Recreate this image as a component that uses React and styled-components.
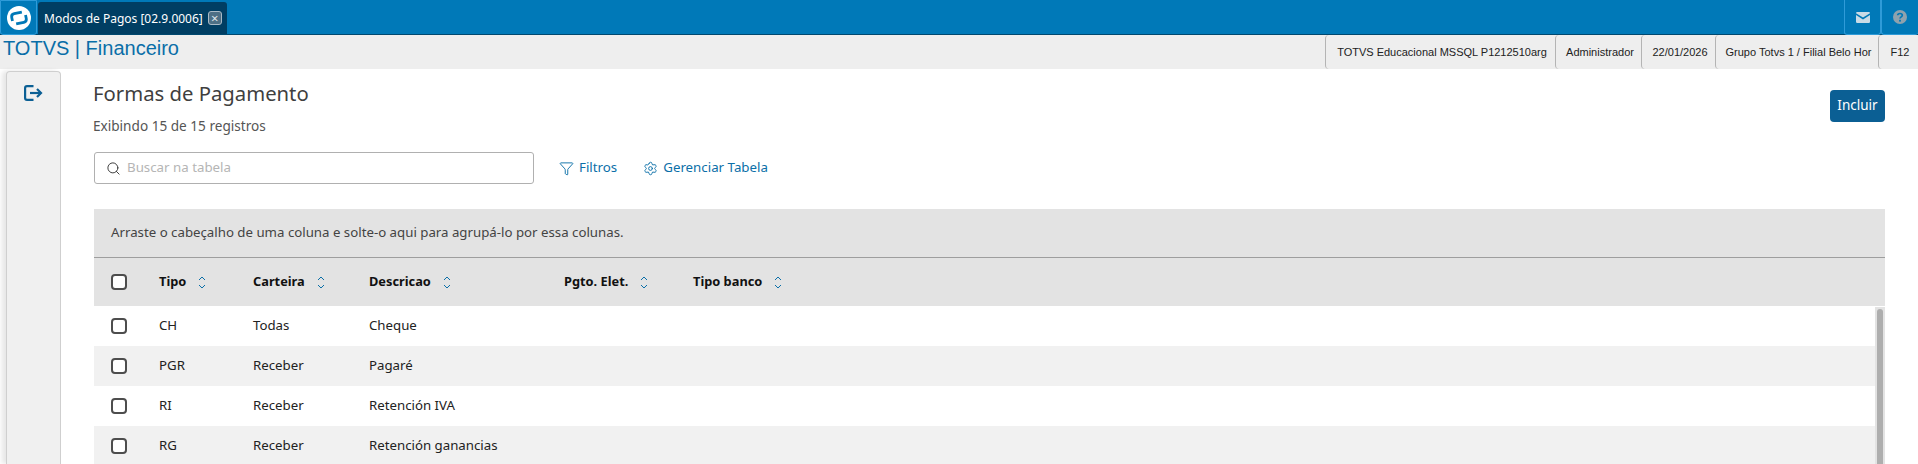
import styled, { createGlobalStyle } from "styled-components";
import { Search, Filter, Settings } from "lucide-react";

const GlobalStyle = createGlobalStyle`
  html, body {
    margin: 0;
    height: 100%;
    overflow: hidden;
    background: #fff;
  }
  * { box-sizing: border-box; }
`;

const Page = styled.div`
  width: 1918px;
  height: 464px;
  overflow: hidden;
  font-family: "Noto Sans", "Open Sans", sans-serif;
  color: #1f1f1f;
`;

const TopBar = styled.header`
  height: 35px;
  display: flex;
  align-items: stretch;
  background: #0079b8;
  border-bottom: 1px solid #00486f;
`;

const LogoButton = styled.div`
  width: 37px;
  height: 35px;
  display: flex;
  align-items: center;
  justify-content: center;
  border: 1px solid #2f9bd8;
  border-radius: 0 0 3px 3px;
`;

const Tab = styled.div`
  width: 189px;
  margin: 2px 0 0 1px;
  display: flex;
  align-items: center;
  gap: 5px;
  padding-left: 6px;
  background: #003e63;
  border-radius: 3px 3px 0 0;
  color: #fff;
  font-size: 12px;
  white-space: nowrap;
`;

const TabClose = styled.span`
  width: 14px;
  height: 14px;
  display: flex;
  align-items: center;
  justify-content: center;
  border: 1px solid #a9bac6;
  border-radius: 3px;
  background: #4d6f85;
  color: #dfe6eb;
  font-size: 13px;
  line-height: 1;
`;

const TopActions = styled.div`
  margin-left: auto;
  display: flex;
`;

const ActionCell = styled.div`
  width: 37px;
  height: 35px;
  display: flex;
  align-items: center;
  justify-content: center;
  border: 1px solid #2f9bd8;
  border-top: 0;
  border-right-width: ${(p) => (p.$last ? 0 : "1px")};
  border-radius: 0 0 3px 3px;
`;

const InfoBar = styled.div`
  height: 34px;
  display: flex;
  align-items: center;
  background: #eeeeee;
`;

const AppTitle = styled.div`
  padding-left: 3px;
  margin-top: -8px;
  font-family: "Liberation Sans", Arial, sans-serif;
  font-size: 20px;
  color: #0a6ea8;
`;

const InfoCells = styled.div`
  margin-left: auto;
  height: 100%;
  display: flex;
`;

const InfoCell = styled.div`
  width: ${(p) => p.$w}px;
  padding-left: 3px;
  display: flex;
  align-items: center;
  justify-content: center;
  border-left: 1px solid #b4b4b4;
  border-radius: 4px 0 0 4px;
  font-family: "Liberation Sans", Arial, sans-serif;
  font-size: 11px;
  color: #222;
  white-space: nowrap;
  overflow: hidden;
`;

const Body = styled.div`
  display: flex;
  align-items: stretch;
  height: 395px;
`;

const SideRail = styled.aside`
  width: 94px;
  flex: none;
  padding: 2px 33px 0 6px;
`;

const RailPanel = styled.div`
  height: 100%;
  padding-top: 13px;
  display: flex;
  justify-content: center;
  align-items: flex-start;
  background: #f0f0f0;
  border: 1px solid #cfcfcf;
  border-bottom: 0;
  border-radius: 4px 4px 0 0;
  box-shadow: -4px 0 5px rgba(0, 0, 0, 0.1);
`;

const Main = styled.main`
  width: 1791px;
  flex: none;
`;

const HeadRow = styled.div`
  display: flex;
  justify-content: space-between;
  align-items: flex-start;
  height: 83px;
  padding-top: 11px;
`;

const HeadText = styled.div`
  margin-left: -1px;
`;

const Title = styled.h1`
  margin: 0;
  font-size: 20.3px;
  font-weight: 400;
  line-height: 27px;
  color: #3f3f3f;
`;

const Subtitle = styled.p`
  margin: 10px 0 0;
  font-size: 13.6px;
  line-height: 18px;
  color: #555;
`;

const PrimaryButton = styled.button`
  width: 55px;
  height: 32px;
  margin-top: 10px;
  padding: 0 0 2px;
  border: 0;
  border-radius: 4px;
  background: #0b5f94;
  color: #fff;
  font: inherit;
  font-size: 13.5px;
`;

const Toolbar = styled.div`
  display: flex;
  align-items: center;
  height: 32px;
  margin-bottom: 25px;
`;

const SearchBox = styled.div`
  width: 440px;
  height: 32px;
  display: flex;
  align-items: center;
  gap: 6px;
  padding-left: 11px;
  border: 1px solid #b0b0b0;
  border-radius: 3px;
  font-size: 13.3px;
  color: #b5b5b5;
  svg { color: #333; }
`;

const RaisedText = styled.span`
  padding-bottom: 2px;
`;

const LinkButton = styled.span`
  display: inline-flex;
  align-items: center;
  gap: 5px;
  margin-left: ${(p) => p.$gap}px;
  font-size: 13.3px;
  color: #0b6fa8;
`;

const TableWrap = styled.div`
  position: relative;
  background: #e3e3e3;
`;

const GroupHint = styled.div`
  height: 49px;
  padding: 0 17px 2px;
  display: flex;
  align-items: center;
  font-size: 13.25px;
  color: #444;
  border-bottom: 1px solid #9e9e9e;
`;

const Row = styled.div`
  display: grid;
  grid-template-columns: 48px 94px 116px 195px 129px 1fr;
  align-items: center;
  height: ${(p) => (p.$head ? 48 : 40)}px;
  margin-right: ${(p) => (p.$head ? 0 : 10)}px;
  padding-left: 17px;
  background: ${(p) => (p.$head ? "#e3e3e3" : p.$odd ? "#f1f1f1" : "#fff")};
  font-size: 13.25px;
  color: #222;
`;

const Check = styled.span`
  width: 16px;
  height: 16px;
  background: #fff;
  border: 2px solid #4d4d4d;
  border-radius: 4px;
`;

const HeadCell = styled.span`
  display: flex;
  align-items: center;
  gap: 12px;
  font-size: 12.8px;
  font-weight: 700;
  color: #111;
`;

const Rows = styled.div`
  background: #fff;
`;

const ScrollTrack = styled.div`
  position: absolute;
  top: 98px;
  right: 0;
  bottom: 0;
  width: 10px;
  background: #e3e3e3;
`;

const ScrollThumb = styled.div`
  width: 6px;
  height: 200px;
  margin: 2px 0 0 2px;
  background: #aeaeae;
  border-radius: 3px 3px 0 0;
`;

const columns = ["Tipo", "Carteira", "Descricao", "Pgto. Elet.", "Tipo banco"];

const records = [
  ["CH", "Todas", "Cheque"],
  ["PGR", "Receber", "Pagaré"],
  ["RI", "Receber", "Retención IVA"],
  ["RG", "Receber", "Retención ganancias"],
];

const infoItems = [
  ["TOTVS Educacional MSSQL P1212510arg", 230],
  ["Administrador", 86],
  ["22/01/2026", 74],
  ["Grupo Totvs 1 / Filial Belo Hor", 163],
  ["F12", 40],
];

const TotvsLogo = () => (
  <svg width="24" height="24" viewBox="0 0 24 24" fill="none">
    <circle cx="12" cy="12" r="12" fill="#fff" />
    <g stroke="#0079b8" strokeWidth="2.8" fill="none" transform="rotate(-12 12 12)">
      <path d="M16 6.8 H8.2 Q5 6.8 5 10 V13.5" />
      <path d="M8 17.2 H15.8 Q19 17.2 19 14 V10.5" />
    </g>
  </svg>
);

const ExitIcon = () => (
  <svg width="19" height="16" viewBox="0 0 19 16" fill="none" stroke="#0b5f94" strokeWidth="2.2">
    <path d="M9.5 1.1 H3 Q1.1 1.1 1.1 3 V13 Q1.1 14.9 3 14.9 H9.5" />
    <path d="M6 8 H16.5" />
    <path d="M13 4 L17 8 L13 12" />
  </svg>
);

const SortIcon = () => (
  <svg width="8" height="15" viewBox="0 0 8 15" fill="none" stroke="#0b6fa8" strokeWidth="1">
    <path d="M1 5 L4 2 L7 5" />
    <path d="M1 10 L4 13 L7 10" />
  </svg>
);

const MailIcon = () => (
  <svg width="14" height="11" viewBox="0 0 14 11" fill="#c9dbe6">
    <path d="M0 1.2 A1.2 1.2 0 0 1 1.2 0 H12.8 A1.2 1.2 0 0 1 14 1.2 L7 5.6 Z" />
    <path d="M0 3 L7 7.4 L14 3 V9.8 A1.2 1.2 0 0 1 12.8 11 H1.2 A1.2 1.2 0 0 1 0 9.8 Z" />
  </svg>
);

const HelpIcon = () => (
  <svg width="14" height="14" viewBox="0 0 14 14">
    <circle cx="7" cy="7" r="7" fill="#8fa2ad" />
    <path d="M4.7 5.3 C4.7 2.9 9.3 2.9 9.3 5.3 C9.3 6.9 7 6.8 7 8.6" fill="none" stroke="#0079b8" strokeWidth="1.7" />
    <rect x="6.1" y="9.8" width="1.8" height="1.8" fill="#0079b8" />
  </svg>
);

export default function App() {
  return (
    <Page>
      <GlobalStyle />
      <TopBar>
        <LogoButton>
          <TotvsLogo />
        </LogoButton>
        <Tab>
          Modos de Pagos [02.9.0006]
          <TabClose>×</TabClose>
        </Tab>
        <TopActions>
          <ActionCell>
            <MailIcon />
          </ActionCell>
          <ActionCell $last>
            <HelpIcon />
          </ActionCell>
        </TopActions>
      </TopBar>
      <InfoBar>
        <AppTitle>TOTVS | Financeiro</AppTitle>
        <InfoCells>
          {infoItems.map(([text, w]) => (
            <InfoCell key={text} $w={w}>
              {text}
            </InfoCell>
          ))}
        </InfoCells>
      </InfoBar>
      <Body>
        <SideRail>
          <RailPanel>
            <ExitIcon />
          </RailPanel>
        </SideRail>
        <Main>
          <HeadRow>
            <HeadText>
              <Title>Formas de Pagamento</Title>
              <Subtitle>Exibindo 15 de 15 registros</Subtitle>
            </HeadText>
            <PrimaryButton>Incluir</PrimaryButton>
          </HeadRow>
          <Toolbar>
            <SearchBox>
              <Search size={15} strokeWidth={1.5} />
              <RaisedText>Buscar na tabela</RaisedText>
            </SearchBox>
            <LinkButton $gap={25}>
              <Filter size={15} strokeWidth={1.5} />
              <RaisedText>Filtros</RaisedText>
            </LinkButton>
            <LinkButton $gap={26}>
              <Settings size={15} strokeWidth={1.5} />
              <RaisedText>Gerenciar Tabela</RaisedText>
            </LinkButton>
          </Toolbar>
          <TableWrap>
            <GroupHint>Arraste o cabeçalho de uma coluna e solte-o aqui para agrupá-lo por essa colunas.</GroupHint>
            <Row $head>
              <Check />
              {columns.map((c) => (
                <HeadCell key={c}>
                  <RaisedText>{c}</RaisedText>
                  <SortIcon />
                </HeadCell>
              ))}
            </Row>
            <Rows>
              {records.map((r, i) => (
                <Row key={r[0]} $odd={i % 2 === 1}>
                  <Check />
                  <RaisedText>{r[0]}</RaisedText>
                  <RaisedText>{r[1]}</RaisedText>
                  <RaisedText>{r[2]}</RaisedText>
                </Row>
              ))}
            </Rows>
            <ScrollTrack>
              <ScrollThumb />
            </ScrollTrack>
          </TableWrap>
        </Main>
      </Body>
    </Page>
  );
}
